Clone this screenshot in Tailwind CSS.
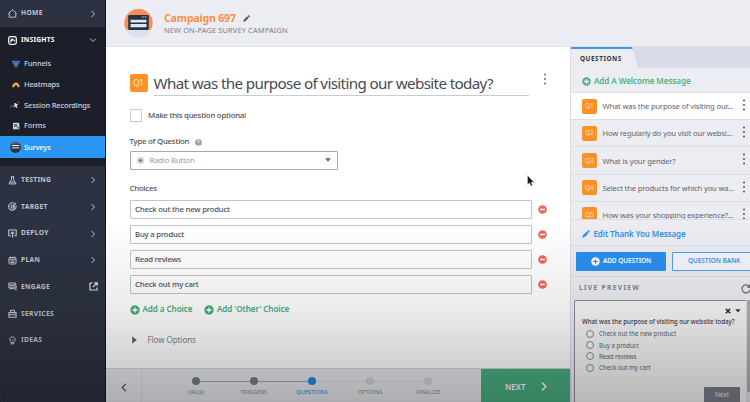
<!DOCTYPE html>
<html lang="en">
<head>
<meta charset="utf-8">
<title>Campaign 697</title>
<script src="https://cdn.jsdelivr.net/npm/@tailwindcss/browser@4"></script>
</head>
<body class="relative h-[402px] w-[750px] overflow-hidden bg-black font-['Noto_Sans','Open_Sans',sans-serif] whitespace-nowrap text-[#4d5059]">
<svg class="hidden">
  <defs>
    <symbol id="right" viewBox="0 0 6 8"><path d="M1.5 1l3 3-3 3" fill="none" stroke="currentColor" stroke-width="1"/></symbol>
    <symbol id="plus" viewBox="0 0 10 10"><circle cx="5" cy="5" r="4.7" fill="currentColor"/><path d="M5 2.4v5.2M2.4 5h5.2" stroke="#fff" stroke-width="1.4"/></symbol>
    <symbol id="minus" viewBox="0 0 10 10"><circle cx="5" cy="5" r="4.8" fill="#f2645c"/><path d="M2.3 5h5.4" stroke="#fff" stroke-width="1.7"/></symbol>
    <symbol id="dots" viewBox="0 0 4 12"><g fill="currentColor"><circle cx="2" cy="1.5" r="1.1"/><circle cx="2" cy="6" r="1.1"/><circle cx="2" cy="10.5" r="1.1"/></g></symbol>
    <symbol id="pencil" viewBox="0 0 8 8"><path d="M.3 7.7l.6-2.4L4.7 1.500l1.800 1.800L2.700 7.100zM5.200 1l.8-.8q.3-.2.6 0l1.200 1.200q.2.3 0 .6l-.8.8z" fill="currentColor"/></symbol>
  </defs>
</svg>
<div class="flex h-full w-full overflow-hidden rounded-bl-[4px] bg-white">
  <!-- Sidebar -->
  <nav class="flex w-[106px] shrink-0 flex-col border-r border-[#11131d] bg-[#2d3242] text-[6.700px] font-bold tracking-[0.320px] text-[#c0c3cd]">
    <div class="flex h-[27px] items-center pr-[9px] pl-2">
      <svg class="mr-[4px] size-[9px]" viewBox="0 0 9 9" fill="none" stroke="currentColor"><path d="M1.200 3.900v4.300h6.600V3.900M.5 4.200l4-3.300 4 3.300"/></svg>
      <span class="flex-1">HOME</span><svg class="h-2 w-1.5"><use href="#right"/></svg>
    </div>
    <div class="flex h-[139px] flex-col bg-[#1c1e2a]">
      <div class="flex h-[26px] items-center pr-2 pl-2 text-white">
        <svg class="mr-[4px] size-[9px]" viewBox="0 0 9 9" fill="none" stroke="currentColor"><rect x=".7" y=".7" width="7.600" height="7.600" rx="1.800" stroke-width="1.200"/><path d="M2.500 6.300V4l1.800-1.400 2.200 1.700v1.200L5 4z" fill="currentColor" stroke-width=".5"/></svg>
        <span class="flex-1 tracking-[0.230px]">INSIGHTS</span>
        <svg class="h-[6px] w-2 text-[#b5b8c1]" viewBox="0 0 8 6" fill="none" stroke="currentColor"><path d="M1 1.500l3 3 3-3"/></svg>
      </div>
      <div class="flex flex-1 flex-col text-[7.500px] font-medium tracking-[-0.150px] text-[#d0d2d9]">
        <div class="flex h-[21px] items-center pt-px pl-3"><svg class="mr-1 size-2" viewBox="0 0 8 8"><path d="M0 .8h8v1.800H0z" fill="#477cc4"/><path d="M1.100 3h5.800L6 5H2z" fill="#3596db"/><path d="M2.400 5.200h3.200v2H2.400z" fill="#3c68ad"/></svg>Funnels</div>
        <div class="flex h-[21px] items-center pl-3"><svg class="mr-1 size-2" viewBox="0 0 8 8" fill="none"><path d="M.8 6.200Q1.500 2 4 2t3.200 4.200" stroke="#e64d40" stroke-width="1.500"/><path d="M1.600 6Q2.300 3 4 3t2.400 3" stroke="#f4cb3a" stroke-width="1.600"/><path d="M.4 6.400Q.5 4.600 1.600 3.200" stroke="#54ad54" stroke-width="1.200"/></svg>Heatmaps</div>
        <div class="flex h-[21px] items-center pl-[10px]"><svg class="mr-1 h-[9px] w-[10px]" viewBox="0 0 10 9" fill="none"><path d="M.3 6q1.500-2 2.600-.8t2.400.5" stroke="#858894" stroke-width=".9"/><path d="M4.500 1.800l3.900 2-1.700.7.6 2.300-1.300.3-.6-2-1.200 1z" fill="#e5e6ea"/><circle cx="8.500" cy="1.200" r=".8" fill="#df5269"/></svg>Session Recordings</div>
        <div class="flex h-[20px] items-center pl-3"><svg class="mr-1 size-2" viewBox="0 0 8 8"><path d="M1 .8h6.300v6.500H1z" fill="#d2d5da"/><path d="M2 2h3.300v3H2z" fill="#547b85"/><path d="M5 5h1.500v1.500H5z" fill="#4d5362"/></svg>Forms</div>
        <div class="flex h-[22px] items-center bg-[#2b95f4] pl-[10px] text-white"><svg class="mr-[3px] size-[11px]" viewBox="0 0 11 11"><circle cx="5.500" cy="5.500" r="5.400" fill="#2c3341"/><path d="M2.100 2.300Q5.500-.8 8.900 2.300z" fill="#80605b"/><path d="M1.800 3.500h7.400M1.800 5.900h7.400" stroke="#e5e9ef"/><path d="M1.800 5h7.400" stroke="#b98169" stroke-width=".5"/></svg><span class="pt-px">Surveys</span></div>
      </div>
    </div>
    <div class="flex flex-col pt-[0.800px] [&>div]:flex [&>div]:h-[26.700px] [&>div]:items-center [&>div]:pr-[9px] [&>div]:pl-2">
      <div><svg class="mr-[4px] size-[9px]" viewBox="0 0 9 9" fill="none" stroke="currentColor"><path d="M2.800.8h3.400M3.500 1v2.500L1 7.900h7L5.500 3.500V1M2 6h5"/></svg><span class="flex-1">TESTING</span><svg class="h-2 w-1.5"><use href="#right"/></svg></div>
      <div><svg class="mr-[4px] size-[9px]" viewBox="0 0 9 9" fill="none" stroke="currentColor"><path d="M7.900 3.500A3.700 3.700 0 1 1 6 1.200M5.800 3.500A1.600 1.600 0 1 1 4.500 3M4.500 4.600L8 1" stroke-width="1.100"/></svg><span class="flex-1">TARGET</span><svg class="h-2 w-1.5"><use href="#right"/></svg></div>
      <div><svg class="mr-[4px] size-[9px]" viewBox="0 0 9 9" fill="none" stroke="currentColor"><path d="M3 6.700H.8V1h7.400v5.700H6M4.500 8.500V3.200M2.800 4.700l1.700-1.600 1.700 1.600" stroke-width="1.100"/></svg><span class="flex-1">DEPLOY</span><svg class="h-2 w-1.5"><use href="#right"/></svg></div>
      <div><svg class="mr-[4px] size-[9px]" viewBox="0 0 9 9" fill="none" stroke="currentColor"><rect x="1" y="1.500" width="7" height="6.500" rx="1"/><path d="M1 3.200h7M2.700.5v1M6.300.5v1M2.500 5h4M2.500 6.500h4"/></svg><span class="flex-1">PLAN</span><svg class="h-2 w-1.5"><use href="#right"/></svg></div>
      <div class="pr-[7px]!"><svg class="mr-[4px] size-[9px]" viewBox="0 0 9 9" fill="none" stroke="currentColor"><path d="M.8 1h6.900v2H.8zM.8 3.800h7.400v2H.8zM1.500 6.700h5.200L8 8.200V6.500"/></svg><span class="flex-1">ENGAGE</span><svg class="size-[9px] text-[#dddfe5]" viewBox="0 0 9 9" fill="none" stroke="currentColor"><path d="M3.600 1H1v7h7V5.500M5.200.8h3v3M8 1L3.800 5.200" stroke-width="1.200"/></svg></div>
      <div><svg class="mr-[4px] size-[9px]" viewBox="0 0 9 9" fill="none" stroke="currentColor"><path d="M.9 3.600h7.200v4.600H.9zM2.600 3.300V1.200h3.800v2.100M1 5.700h7" stroke-width="1.100"/></svg>SERVICES</div>
      <div><svg class="mr-[4px] size-[9px]" viewBox="0 0 9 9" fill="none" stroke="currentColor"><path d="M3.200 6C.8 4.500 1.700.9 4.500.9S8.200 4.500 5.800 6v1.900H3.200zM3 6.400h3M3.600 3.500l.9.800.9-.8"/></svg>IDEAS</div>
    </div>
  </nav>

  <div class="flex min-w-0 flex-1 flex-col">
    <!-- Campaign header -->
    <header class="flex h-[47px] shrink-0 items-center gap-[11px] border-b border-[#e4e2e8] bg-[#ecedf2] pl-[18px]">
      <svg class="size-[29px]" viewBox="0 0 29 29"><circle cx="14.500" cy="14.500" r="14.200" fill="#dce1eb"/><path d="M2 20.800a14.200 14.200 0 1 1 25 0z" fill="#fe8b5b"/><rect x="4.200" y="6" width="20.600" height="15" rx="1.300" fill="#253444"/><path d="M6.500 10.800h16v2.700h-16zM6.500 15h16v3.200h-16z" fill="#dfe6ef"/><path d="M18 8h1.500M20.700 8h1.500" stroke="#e6edf5" stroke-width="1.200"/></svg>
      <div class="flex flex-col pt-[3px]">
        <div class="flex h-[13px] items-center gap-[7px] text-[10.600px] font-bold tracking-[-0.200px] text-[#fb8f47]">Campaign 697<svg class="size-[7px] text-[#5a5e6b]"><use href="#pencil"/></svg></div>
        <div class="flex h-[12px] items-center text-[7.400px] tracking-[0.160px] text-[#777b88]">NEW ON-PAGE SURVEY CAMPAIGN</div>
      </div>
    </header>

    <div class="flex min-h-0 flex-1">
      <!-- Question editor -->
      <main class="flex w-[464px] shrink-0 flex-col">
        <div class="flex h-[321px] flex-col pl-[23.500px] text-[7.800px] font-medium tracking-[-0.220px]">
          <div class="mt-[25px] flex h-[24px]">
            <div class="mt-[2px] flex h-[18px] w-[18px] items-center justify-center rounded-[2px] bg-[#fe9127] text-[8px] font-normal text-[#ffe9d2]">Q1</div>
            <h1 class="ml-[6px] flex w-[375px] items-center border-b border-[#c9cad3] pb-px text-[15.200px] font-normal tracking-[-0.640px] text-[#474a54]">What was the purpose of visiting our website today?</h1>
            <svg class="mt-px ml-[14px] h-[12px] w-[4px] text-[#777a84]"><use href="#dots"/></svg>
          </div>
          <div class="mt-[13px] flex h-[13px] items-center gap-[6px]"><span class="size-[12.500px] border border-[#c9cbd2]"></span>Make this question optional</div>
          <div class="mt-[13px] flex h-[13px] items-center gap-[6px] pt-px">Type of Question<svg class="size-[7px]" viewBox="0 0 8 8"><circle cx="4" cy="4" r="3.800" fill="#9b9eaa"/><path d="M2.900 3.100q.1-1 1.100-1t1.100.9q0 .6-.6.9t-.5.800M4 5.400v.8" fill="none" stroke="#fff" stroke-width=".9"/></svg></div>
          <div class="mt-[2.500px] flex h-[19px] w-[208.500px] items-center rounded-[1px] border border-[#a6a8b0] px-[6px] text-[7.600px] font-normal tracking-[-0.120px] text-[#9698a0]">
            <svg class="mr-[6px] size-[7px]" viewBox="0 0 8 8"><circle cx="4" cy="4" r="3.500" fill="none" stroke="#999ba3" stroke-width=".8"/><circle cx="4" cy="4" r="2" fill="#777983"/></svg>
            <span class="flex-1 pt-px">Radio Button</span>
            <svg class="h-[4px] w-[6px]" viewBox="0 0 6 4"><path d="M0 .2h6L3 3.800z" fill="#666973"/></svg>
          </div>
          <div class="mt-[12px] mb-[5px] flex h-[13px] items-center pt-px">Choices</div>
          <div class="flex flex-col gap-[6px] [&>div]:flex [&>div]:h-[19px] [&>div]:items-center [&>div]:gap-[5.500px] [&_span]:flex [&_span]:h-full [&_span]:w-[402.500px] [&_span]:items-center [&_span]:rounded-[1px] [&_span]:border [&_span]:border-[#c2c4cb] [&_span]:pt-px [&_span]:pl-[4.500px] [&_svg]:size-[9px]">
            <div><span>Check out the new product</span><svg><use href="#minus"/></svg></div>
            <div><span>Buy a product</span><svg><use href="#minus"/></svg></div>
            <div><span>Read reviews</span><svg><use href="#minus"/></svg></div>
            <div><span>Check out my cart</span><svg><use href="#minus"/></svg></div>
          </div>
          <div class="mt-[9px] flex h-[13px] items-center pt-px text-[8.100px] font-semibold tracking-[-0.080px] text-[#48ad80]">
            <svg class="mr-[3px] size-[10px]"><use href="#plus"/></svg>Add a Choice
            <svg class="mr-[3px] ml-[11.500px] size-[10px]"><use href="#plus"/></svg>Add 'Other' Choice
          </div>
          <div class="mt-[18px] flex h-[13px] items-center gap-[11px] pl-[2px] text-[8.100px] font-normal tracking-[-0.100px] text-[#82848c]"><svg class="h-[8px] w-[5px]" viewBox="0 0 5 8"><path d="M.2.2v7.600L4.800 4z" fill="#62656f"/></svg>Flow Options</div>
        </div>

        <!-- Step navigation -->
        <footer class="flex flex-1 border-t border-[#cfd1db] bg-[#e7e8ed]">
          <div class="flex w-[36px] items-center justify-center border-r border-[#d9dae1] pt-[3px]"><svg class="h-[9px] w-[6px]" viewBox="0 0 6 9" fill="none" stroke="#5d606c" stroke-width="1.300"><path d="M5 .8L1.200 4.500 5 8.200"/></svg></div>
          <div class="relative flex flex-1 pt-[7.500px] pl-[24.500px] text-[5.700px] tracking-[-0.050px] text-[#858895]">
            <div class="absolute top-[11.500px] left-[54px] h-px w-[116px] bg-[#a1a3b0]"></div>
            <div class="absolute top-[11.500px] left-[170px] h-px w-[116px] bg-[#dadbe2]"></div>
            <div class="relative flex [&>div]:flex [&>div]:w-[58.200px] [&>div]:flex-col [&>div]:items-center [&>div]:gap-[3px] [&>div]:leading-[8px] [&_i]:size-[8px] [&_i]:rounded-full">
              <div><i class="bg-[#787b8d]"></i>URL(S)</div>
              <div><i class="bg-[#787b8d]"></i>TRIGGERS</div>
              <div class="text-[#2389e6]"><i class="bg-[#2389e6]"></i>QUESTIONS</div>
              <div><i class="bg-[#cfd0da]"></i>OPTIONS</div>
              <div><i class="bg-[#cfd0da]"></i>FINALIZE</div>
            </div>
          </div>
          <div class="flex w-[89px] items-center bg-[#49ad80] pt-[2px] pl-[24px] text-[8px] font-semibold text-white">NEXT<svg class="ml-[16px] h-[9px] w-[6px]" viewBox="0 0 6 9" fill="none" stroke="#fff" stroke-width="1.500"><path d="M1 .6l3.800 3.900L1 8.400"/></svg></div>
        </footer>
      </main>

      <!-- Question list -->
      <aside class="flex min-w-0 flex-1 flex-col border-l border-[#d9dae2] bg-[#ecedf2]">
        <div class="flex h-[21px] shrink-0 bg-[#d9dbe7]">
          <div class="flex w-[67px] bg-[#ecedf2] [clip-path:polygon(0_0,61px_0,67px_100%,0_100%)]"><div class="flex w-full items-center border-t-2 border-[#3f98ee] pl-[9px] text-[6.400px] font-bold tracking-[0.550px] text-[#32343d]">QUESTIONS</div></div>
        </div>
        <div class="flex h-[25px] shrink-0 items-center border-b border-[#dfe0e7] pt-[2px] pl-[11px] text-[8.100px] font-semibold tracking-[-0.080px] text-[#4cb387]"><svg class="mr-[3px] size-[9px]"><use href="#plus"/></svg>Add A Welcome Message</div>
        <div class="flex h-[127px] shrink-0 flex-col overflow-hidden border-b border-[#dcdde4] text-[7.600px] tracking-[-0.140px] text-[#60636d] [&>div]:flex [&>div]:h-[27.200px] [&>div]:shrink-0 [&>div]:items-center [&>div]:border-b [&>div]:border-[#dcdde4] [&>div]:pl-[11px] [&_b]:mr-[6px] [&_b]:flex [&_b]:h-[15px] [&_b]:w-[14.500px] [&_b]:items-center [&_b]:justify-center [&_b]:rounded-[2px] [&_b]:bg-[#fe9127] [&_b]:text-[6.500px] [&_b]:font-normal [&_b]:text-[#ffe3c6] [&_span]:w-[139px] [&_span]:pt-[1.500px] [&_svg]:mb-[2px] [&_svg]:h-[12px] [&_svg]:w-[4px]">
          <div class="bg-white"><b>Q1</b><span>What was the purpose of visiting our...</span><svg><use href="#dots"/></svg></div>
          <div><b>Q2</b><span>How regularly do you visit our websi...</span><svg><use href="#dots"/></svg></div>
          <div><b>Q3</b><span>What is your gender?</span><svg><use href="#dots"/></svg></div>
          <div><b>Q4</b><span>Select the products for which you wa...</span><svg><use href="#dots"/></svg></div>
          <div><b>Q5</b><span>How was your shopping experience?...</span><svg><use href="#dots"/></svg></div>
        </div>
        <div class="flex h-[26px] shrink-0 items-center border-b border-[#dcdde4] pt-[2px] pl-[11px] text-[8px] font-semibold tracking-[-0.100px] text-[#2c8fea]"><svg class="mr-[3.500px] size-[8px]"><use href="#pencil"/></svg>Edit Thank You Message</div>
        <div class="flex h-[31px] shrink-0 items-center gap-[6px] border-b border-[#dcdde4] pl-[5px] text-[6.500px] font-semibold tracking-[-0.080px]">
          <div class="flex h-[19px] w-[90px] shrink-0 items-center justify-center rounded-[1px] bg-[#2a90f0] text-white"><svg class="mr-[3px] size-[9px]" viewBox="0 0 10 10"><circle cx="5" cy="5" r="4.700" fill="#fff"/><path d="M5 2.400v5.200M2.400 5h5.200" stroke="#2a90f0" stroke-width="1.300"/></svg>ADD QUESTION</div>
          <div class="flex h-[19px] w-[90px] shrink-0 items-center rounded-[1px] border border-[#4a9fee] bg-[#f4f6fb] pl-[15px] text-[#3a96ee]">QUESTION BANK</div>
        </div>
        <div class="flex h-[23px] shrink-0 items-center justify-between overflow-hidden pl-[8px] text-[6.900px] font-semibold tracking-[1.250px] text-[#747786]">LIVE PREVIEW<svg class="-mr-[1px] size-[10px]" viewBox="0 0 10 10" fill="none" stroke="#6c6f7a" stroke-width="1.200"><path d="M8 2.200A4 4 0 1 0 8.800 6.200M8.700.6v2.600H6"/></svg></div>
        <div class="flex flex-1 pl-[3px]">
          <div class="flex flex-1 flex-col rounded-tl-[2px] border-t border-l border-[#8a8d9c] bg-[#f5f5f5] pt-[6px] pl-[7px] text-[6.200px] tracking-[-0.040px]">
            <div class="flex h-[8px] items-center gap-[4px] self-end pr-[5px]"><svg class="size-[6px]" viewBox="0 0 6 6"><path d="M.8.8l4.400 4.400M5.200.8L.8 5.200" stroke="#22242a" stroke-width="1.400"/></svg><svg class="h-[4px] w-[6px]" viewBox="0 0 6 4"><path d="M.3.3h5.400L3 3.600z" fill="#33353b"/></svg></div>
            <div class="mt-[2px] flex h-[9px] items-center font-medium text-[#3c3e44]">What was the purpose of visiting our website today?</div>
            <div class="mt-[2.500px] flex flex-col pl-[4px] text-[#62646b] [&>div]:flex [&>div]:h-[11.200px] [&>div]:items-center [&>div]:gap-[5px] [&_i]:size-[8px] [&_i]:rounded-full [&_i]:border [&_i]:border-[#898b92]">
              <div><i></i>Check out the new product</div>
              <div><i></i>Buy a product</div>
              <div><i></i>Read reviews</div>
              <div><i></i>Check out my cart</div>
            </div>
            <div class="mt-[13.500px] mr-[6px] flex h-[16px] w-[36px] items-center justify-center self-end rounded-t-[1px] bg-[#7a7d88] text-[6.500px] text-[#e5e6ea]">Next</div>
          </div>
          <div class="flex w-[4px] bg-[#e3e4e8]"><div class="ml-px h-[92px] w-[3px] bg-[#aeb0b6]"></div></div>
        </div>
      </aside>
    </div>
  </div>
</div>
<!-- Pointer -->
<svg class="absolute top-[174.500px] left-[527px] h-[12px] w-[8px]" viewBox="0 0 8 12"><path d="M.6.6v9l2-1.800 1.300 3.200 1.500-.6-1.300-3.100h2.800z" fill="#111" stroke="#ddd" stroke-width=".4"/></svg>
<!-- Bottom shade -->
<div class="pointer-events-none absolute inset-x-0 bottom-0 h-[182px] bg-linear-to-b from-black/0 via-black/8 to-black/25"></div>
</body>
</html>
